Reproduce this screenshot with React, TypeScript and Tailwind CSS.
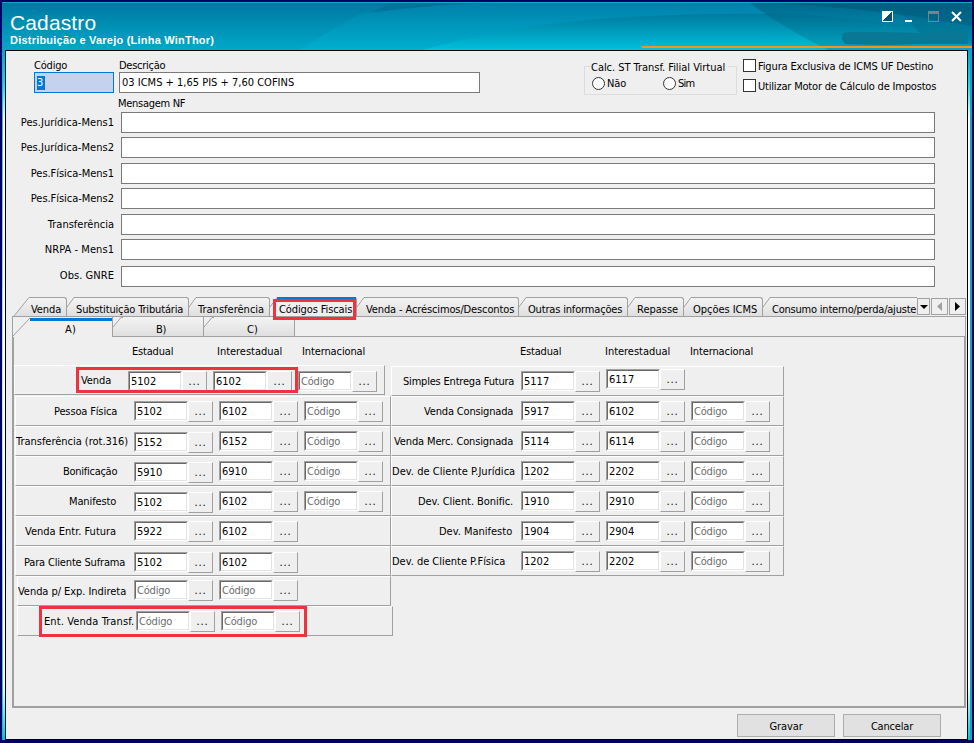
import React, { useLayoutEffect, useRef, useState } from 'react';
import { clsx } from 'clsx';

// Spreads a line of text over a fixed advance width
const Fit = ({ w, children, className = 'relative top-px' }: { w: number; children: string; className?: string }) => {
  const ref = useRef<HTMLSpanElement>(null);
  const [spacing, setSpacing] = useState(0);

  useLayoutEffect(() => {
    if (ref.current) {
      const natural = ref.current.getBoundingClientRect().width;
      setSpacing((w - 0.8 - natural) / children.length);
    }
  }, []);

  return (
    <span ref={ref} className={clsx('inline-block whitespace-pre', className)} style={{ letterSpacing: `${spacing}px` }}>
      {children}
    </span>
  );
};

const Header = () => (
  <header className="relative h-12 w-full overflow-hidden">
    <svg className="absolute inset-0" width="970" height="48" viewBox="2 2 970 48" preserveAspectRatio="none">
      <defs>
        <linearGradient id="base" x1="0" y1="0" x2="0" y2="1">
          <stop offset="0" stopColor="#0077a1" />
          <stop offset="1" stopColor="#00a8c8" />
        </linearGradient>
        <linearGradient id="mid" x1="0" y1="0" x2="0" y2="1">
          <stop offset="0" stopColor="#0089b4" />
          <stop offset="1" stopColor="#00b8d5" />
        </linearGradient>
        <linearGradient id="front" x1="0" y1="0" x2="0" y2="1">
          <stop offset="0" stopColor="#007a9e" />
          <stop offset="1" stopColor="#00c0dc" />
        </linearGradient>
        <linearGradient id="corner" x1="0" y1="0" x2="0" y2="1">
          <stop offset="0" stopColor="#005878" />
          <stop offset="1" stopColor="#0091b0" />
        </linearGradient>
      </defs>
      <rect x="2" y="2" width="970" height="48" fill="url(#base)" />
      <path d="M360 14 Q430 4 500 3 L972 3 V50 H300 Q330 30 360 14Z" fill="url(#mid)" opacity="0.45" />
      <path d="M370 13 Q430 5 480 3 H390Z" fill="#00668d" opacity="0.4" />
      <path d="M422 50 Q530 20 650 16 Q730 12 810 15 L972 30 V50Z" fill="url(#front)" />
      <path d="M750 3 Q780 26 828 50 H972 V3Z" fill="url(#corner)" opacity="0.55" />
      <path d="M750 3 Q850 4 972 26 V3Z" fill="#004866" opacity="0.35" />
      <path d="M884 3 Q908 16 920 34 L972 45 V3Z" fill="#006282" opacity="0.35" />
      <rect x="2" y="2" width="970" height="1" fill="#0bacc6" />
    </svg>
    <div className="relative pl-2 pt-2 font-['Liberation_Sans'] text-white">
      <h1 className="h-[23px] text-[21px] font-normal leading-[23px]"><Fit w={87}>Cadastro</Fit></h1>
      <p className="h-4 text-[11px] font-bold leading-[14px]"><Fit w={205} className="relative">Distribuição e Varejo (Linha WinThor)</Fit></p>
    </div>
    <div className="absolute right-0 top-[44px] h-[2px] w-[330px] bg-[#f39519]" />
    <svg className="absolute left-[838px] top-[27px]" width="132" height="18" viewBox="840 29 132 18">
      <path d="M843 33 Q850 31 878 32 L925 33 Q955 30 965 31 Q970 35 967 44 L920 44 L885 45 L845 44 Q840 39 843 33Z" fill="#087896" />
    </svg>
    <svg className="absolute left-[878px] top-[7px]" width="90" height="18" viewBox="880 9 90 18" shapeRendering="crispEdges">
      <path d="M882.5 11.5h10v10h-10z" fill="#07506e" stroke="#fff" />
      <path d="M882 11h10L882 21z" fill="#fff" />
      <path d="M905 20h7v2h-7z" fill="#fff" />
      <path d="M928.5 12v9.5h10V12" fill="none" stroke="#808080" />
      <path d="M928 11h11v3h-11z" fill="#808080" />
      <path d="M952 12l9 9M961 12l-9 9" stroke="#fff" strokeWidth="2" shapeRendering="auto" />
    </svg>
  </header>
);

const messages = [
  { label: 'Pes.Jurídica-Mens1', w: 94, mt: 'mt-[2px]' },
  { label: 'Pes.Jurídica-Mens2', w: 94, mt: 'mt-1' },
  { label: 'Pes.Física-Mens1', w: 84, mt: 'mt-[5px]' },
  { label: 'Pes.Física-Mens2', w: 84, mt: 'mt-1' },
  { label: 'Transferência', w: 67, mt: 'mt-[5px]' },
  { label: 'NRPA - Mens1', w: 70, mt: 'mt-1' },
  { label: 'Obs. GNRE', w: 55, mt: 'mt-[6px]', shift: '-ml-px', text: 'relative' },
];

const Checkbox = ({ label, w }: { label: string; w: number }) => (
  <label className="flex h-5 items-start">
    <span className="mr-[2px] h-[13px] w-[13px] border border-[#333] bg-white" />
    <Fit w={w}>{label}</Fit>
  </label>
);

const Radio = ({ label, w }: { label: string; w: number }) => (
  <label className="flex items-center">
    <span className="mr-[2px] h-[13px] w-[13px] rounded-full border border-[#333] bg-white" />
    <Fit w={w}>{label}</Fit>
  </label>
);

const TopForm = () => (
  <section>
    <div className="flex h-[45px]">
      <div className="ml-7 w-20 pt-[7px]">
        <Fit w={34}>Código</Fit>
        <div className="flex h-[21px] items-center border border-[#0078d7] bg-[#c5d2ee] pl-[2px]">
          <span className="h-[14px] w-2 bg-[#0078d7] text-white">3</span>
        </div>
      </div>
      <div className="ml-[5px] w-[361px] pt-[7px]">
        <Fit w={47}>Descrição</Fit>
        <div className="flex h-[21px] items-center border border-[#7a7a7a] bg-white pl-[2px]">
          <Fit w={173} className="relative">03 ICMS + 1,65 PIS + 7,60 COFINS</Fit>
        </div>
      </div>
      <fieldset className="ml-[104px] mt-[15px] h-[29px] w-[153px] border border-[#dcdcdc]">
        <div className="-mt-[7px] ml-[5px] flex h-[14px] w-[138px] bg-[#efefef] pl-px"><Fit w={135}>Calc. ST Transf. Filial Virtual</Fit></div>
        <div className="ml-[7px] mt-[2px] flex">
          <div className="w-[71px]"><Radio label="Não" w={20} /></div>
          <Radio label="Sim" w={17} />
        </div>
      </fieldset>
      <div className="ml-[6px] pt-2">
        <Checkbox label="Figura Exclusiva de ICMS UF Destino" w={176} />
        <Checkbox label="Utilizar Motor de Cálculo de Impostos" w={179} />
      </div>
    </div>
    <div className="h-[14px] pl-28"><Fit w={68}>Mensagem NF</Fit></div>
    {messages.map((m) => (
      <div key={m.label} className={clsx('flex h-[21px]', m.mt)}>
        <div className="w-[108px] pt-[3px] text-right"><Fit w={m.w} className={m.text}>{m.label}</Fit></div>
        <div className={clsx('ml-[7px] w-[814px] border border-[#7a7a7a] bg-white', m.shift)} />
      </div>
    ))}
  </section>
);

const tabs = [
  { label: 'Venda', w: 31, box: 'w-[53px] pl-[17px]', slope: 16 },
  { label: 'Substituição Tributária', w: 108, box: 'w-[122px] pl-[9px]', slope: 8 },
  { label: 'Transferência', w: 67, box: 'w-[81px] pl-[9px]', slope: 8 },
  { label: 'Códigos Fiscais', w: 74, box: 'w-[87px] pl-[9px]', slope: 8, active: true },
  { label: 'Venda - Acréscimos/Descontos', w: 149, box: 'w-[162px] pl-[9px]', slope: 8 },
  { label: 'Outras informações', w: 95, box: 'w-[109px] pl-[9px]', slope: 8 },
  { label: 'Repasse', w: 42, box: 'w-[56px] pl-[9px]', slope: 8 },
  { label: 'Opções ICMS', w: 65, box: 'w-[79px] pl-[9px]', slope: 8 },
  { label: 'Consumo interno/perda/ajuste', w: 145, box: 'w-[170px] pl-[9px]', slope: 8 },
];

// Slanted left shoulder of a tab
const Slope = ({ w, h, className }: { w: number; h: number; className: string }) => (
  <svg className={clsx('absolute -left-px', className)} width={w + 2} height={h} viewBox={`0 0 ${w + 2} ${h}`}>
    <path d={`M1 0V${w < 10 ? 10 : h}L${w} .5H${w + 2}V0Z`} fill="#efefef" />
    <path d={`M1 ${w < 10 ? 10 : h}L${w} .5H${w + 2}`} fill="none" stroke="#a0a0a0" />
  </svg>
);

const TabBar = () => (
  <div className="mt-[10px] flex h-[19px] pl-2">
    <div className="flex w-[903px] overflow-hidden">
      {tabs.map((t) => (
        <div
          key={t.label}
          className={clsx(
            'relative h-[19px] shrink-0 rounded-tr-[3px] border-r border-t border-[#a0a0a0] pt-[5px]',
            t.active ? 'bg-[#efefef]' : 'bg-linear-to-b from-[#f4f4f4] to-[#dfdfdf]',
            t.box,
          )}
        >
          <Slope w={t.slope} h={19} className="-top-px" />
          {t.active && <div className="absolute left-[7px] right-0 -top-px h-[3px] bg-[#0078d7]" />}
          <Fit w={t.w} className="relative">{t.label}</Fit>
        </div>
      ))}
    </div>
    <div className="mt-px flex h-[17px]">
      <div className="flex w-[13px] items-center justify-center border border-[#a0a0a0]">
        <svg width="8" height="4"><path d="M0 0h8L4 4z" /></svg>
      </div>
      <div className="ml-px flex w-[17px] items-center justify-center border border-[#a0a0a0]">
        <svg width="5" height="9"><path d="M5 0v9L0 4.5z" fill="#a0a0a0" /></svg>
      </div>
      <div className="ml-px flex w-[17px] items-center justify-center border border-[#a0a0a0]">
        <svg width="5" height="9"><path d="M0 0v9L5 4.5z" /></svg>
      </div>
    </div>
  </div>
);

const SubTabs = () => (
  <div className="flex h-5 border-x border-[#a0a0a0]">
    <div className="relative w-[100px] border-r border-[#a0a0a0] pl-[52px] pt-[5px]">
      <svg className="absolute left-0 top-0" width="18" height="20"><path d="M0 19L17 1" stroke="#a0a0a0" /></svg>
      <div className="absolute left-[17px] right-0 top-px h-[3px] bg-[#0078d7]" />
      <Fit w={12}>A)</Fit>
    </div>
    <div className="relative w-[91px] border-b border-r border-[#a0a0a0] bg-linear-to-b from-[#f4f4f4] to-[#dfdfdf] pl-[43px] pt-[5px]">
      <Slope w={9} h={19} className="top-0" />
      <Fit w={11}>B)</Fit>
    </div>
    <div className="relative w-[91px] border-b border-r border-[#a0a0a0] bg-linear-to-b from-[#f4f4f4] to-[#dfdfdf] pl-[43px] pt-[5px]">
      <Slope w={9} h={19} className="top-0" />
      <Fit w={12}>C)</Fit>
    </div>
    <div className="flex-1 border-b border-[#a0a0a0]" />
  </div>
);

type RowData = {
  label: string;
  w: number;
  // label cell: width up to the first field and inset of the text
  cell: string;
  codes: string[];
  box?: string;
  pads?: string[];
};

const leftRows: RowData[] = [
  { label: 'Venda', w: 31, cell: 'w-[113px] pl-[66px] pt-[7px]', codes: ['5102', '6102', ''], box: 'w-[371px] mb-px', pads: ['mt-[5px]', 'mt-[5px]', 'mt-[5px]'] },
  { label: 'Pessoa Física', w: 64, cell: 'w-[118px] pl-[38px] pt-[7px]', codes: ['5102', '6102', ''] },
  { label: 'Transferência (rot.316)', w: 113, cell: 'w-[118px] pt-[7px]', codes: ['5152', '6152', ''], pads: ['mt-[5px]'] },
  { label: 'Bonificação', w: 55, cell: 'w-[118px] pl-[47px] pt-[7px]', codes: ['5910', '6910', ''], pads: ['mt-[5px]'] },
  { label: 'Manifesto', w: 48, cell: 'w-[118px] pl-[53px] pt-[7px]', codes: ['5102', '6102', ''], pads: ['mt-[5px]'] },
  { label: 'Venda Entr. Futura', w: 92, cell: 'w-[118px] pl-[9px] pt-[7px]', codes: ['5922', '6102'] },
  { label: 'Para Cliente Suframa', w: 102, cell: 'w-[118px] pl-[8px] pt-[8px]', codes: ['5102', '6102'], pads: ['mt-[5px]', 'mt-[5px]'] },
  { label: 'Venda p/ Exp. Indireta', w: 109, cell: 'w-[116px] pt-[7px]', codes: ['', ''], box: 'ml-[3px] w-[374px]', pads: ['mt-[3px]', 'mt-[3px]'] },
  { label: 'Ent. Venda Transf.', w: 91, cell: 'w-[118px] pl-[26px] pt-[7px]', codes: ['', ''], box: 'ml-[3px] w-[376px]' },
];

const rightRows: RowData[] = [
  { label: 'Simples Entrega Futura', w: 112, cell: 'w-[129px] pl-[11px] pt-[7px]', codes: ['5117', '6117'], pads: ['mt-1', 'mt-[2px]'] },
  { label: 'Venda Consignada', w: 90, cell: 'w-[129px] pl-[32px] pt-[7px]', codes: ['5917', '6102', ''] },
  { label: 'Venda Merc. Consignada', w: 120, cell: 'w-[129px] pl-[2px] pt-[7px]', codes: ['5114', '6114', ''] },
  { label: 'Dev. de Cliente P.Jurídica', w: 124, cell: 'w-[129px] pt-[7px]', codes: ['1202', '2202', ''] },
  { label: 'Dev. Client. Bonific.', w: 96, cell: 'w-[129px] pl-[26px] pt-[7px]', codes: ['1910', '2910', ''] },
  { label: 'Dev. Manifesto', w: 74, cell: 'w-[129px] pl-[47px] pt-[7px]', codes: ['1904', '2904', ''] },
  { label: 'Dev. de Cliente P.Física', w: 114, cell: 'w-[129px] pt-[7px]', codes: ['1202', '2202', ''] },
];

const CodeField = ({ value, pad }: { value: string; pad: string }) => (
  <div className={clsx('mr-[6px] flex h-[21px] shrink-0', pad)}>
    <div className="h-5 w-[54px] border border-b-white border-l-[#a0a0a0] border-r-white border-t-[#a0a0a0]">
      <div className="h-[18px] border border-b-[#e3e3e3] border-l-[#696969] border-r-[#e3e3e3] border-t-[#696969] bg-white pl-px pt-px">
        {value ? <Fit w={26}>{value}</Fit> : <Fit w={34} className="relative top-px text-[#6d6d6d]">Código</Fit>}
      </div>
    </div>
    <div className="flex w-[25px] justify-center border border-b-[#a0a0a0] border-l-white border-r-[#a0a0a0] border-t-white pt-[3px]">
      <Fit w={13} className="relative">...</Fit>
    </div>
  </div>
);

const Row = ({ row, box }: { row: RowData; box: string }) => (
  <div className={clsx('flex h-[30px] border border-b-[#a0a0a0] border-l-white border-r-[#a0a0a0] border-t-white', box)}>
    <div className={clsx('shrink-0', row.cell)}><Fit w={row.w}>{row.label}</Fit></div>
    {row.codes.map((code, i) => (
      <CodeField key={i} value={code} pad={row.pads?.[i] ?? 'mt-1'} />
    ))}
  </div>
);

const ColumnTitles = ({ className }: { className: string }) => (
  <div className={clsx('flex', className)}>
    <div className="w-[85px]"><Fit w={42}>Estadual</Fit></div>
    <div className="w-[85px]"><Fit w={66}>Interestadual</Fit></div>
    <div><Fit w={64}>Internacional</Fit></div>
  </div>
);

const CodesPanel = () => (
  <div className="relative flex h-[371px] border-x-2 border-b-2 border-[#a0a0a0]">
    <div className="w-[377px] shrink-0">
      <ColumnTitles className="h-7 pl-[118px] pt-[7px]" />
      {leftRows.map((row) => (
        <Row key={row.label} row={row} box={row.box ?? 'ml-px w-[376px]'} />
      ))}
    </div>
    <div className="w-[393px] shrink-0">
      <ColumnTitles className="h-[29px] pl-[129px] pt-[7px]" />
      {rightRows.map((row) => (
        <Row key={row.label} row={row} box="w-[393px]" />
      ))}
    </div>
    {/* Highlight frames */}
    <div className="absolute left-[62px] top-[30px] h-[26px] w-[222px] border-[3px] border-[#ee323e]" />
    <div className="absolute left-[25px] top-[269px] h-[31px] w-[268px] border-[3px] border-[#ee323e]" />
  </div>
);

export default function App() {
  return (
    <div className="flex h-[743px] w-[974px] flex-col overflow-hidden bg-[#000060] px-[2px] pt-[2px] font-['DejaVu_Sans_Condensed','DejaVu_Sans',sans-serif] text-[11px] leading-[14px] text-black [font-stretch:condensed]">
      <Header />
      <div className="flex h-[690px]">
        <div className="w-px bg-linear-to-b from-[#00a8c8] via-[#b8f0f8] to-[#00b4d0]" />
        <div className="w-[2px] bg-[linear-gradient(to_bottom,#00a8c8,#20d8e8_5%,#fff_10%,#fff_92%,#00c4d8)]" />
        <main className="flex w-[963px] flex-col border-x border-b border-t border-black bg-[#efefef]">
          <TopForm />
          <TabBar />
          <div className="relative ml-[6px] w-[954px] border-t border-[#a0a0a0]">
            <SubTabs />
            <CodesPanel />
            <div className="absolute left-[261px] -top-[18px] h-[21px] w-[83px] border-[3px] border-[#ee323e]" />
          </div>
          <footer className="mt-[6px] flex justify-end gap-2 pr-[26px]">
            <button className="h-[23px] w-[98px] border border-[#adadad] bg-[#e1e1e1]"><Fit w={34}>Gravar</Fit></button>
            <button className="h-[23px] w-[98px] border border-[#adadad] bg-[#e1e1e1]"><Fit w={43}>Cancelar</Fit></button>
          </footer>
        </main>
        <div className="w-[2px] bg-[linear-gradient(to_bottom,#00a8c8,#20d8e8_5%,#fff_10%,#fff_92%,#00c4d8)]" />
        <div className="w-[2px] bg-[#08a6c2]" />
      </div>
    </div>
  );
}
